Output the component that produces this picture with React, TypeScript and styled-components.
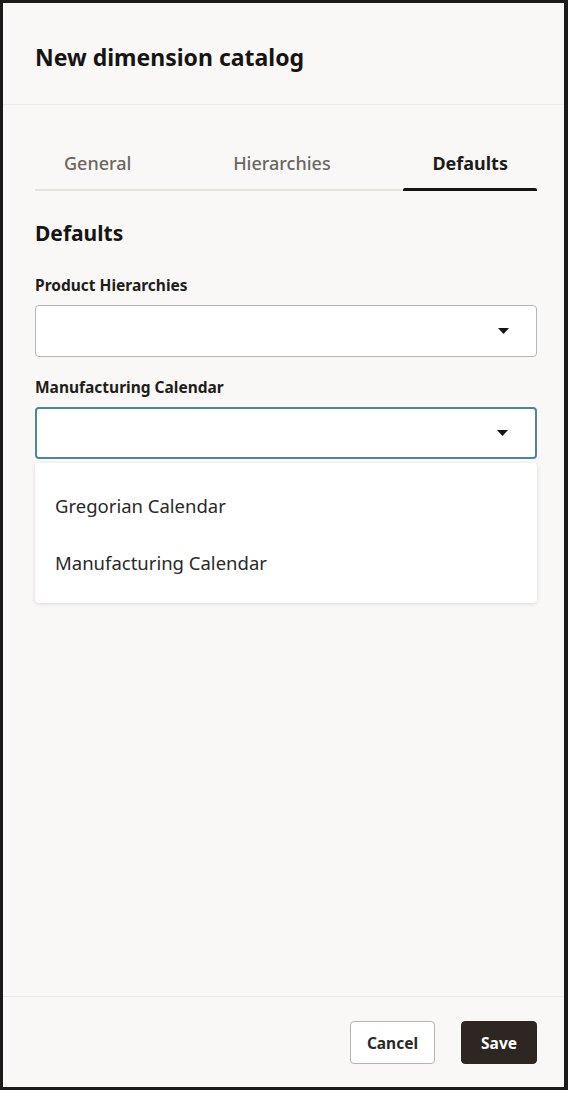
import type { ReactElement } from 'react';
import styled, { createGlobalStyle } from 'styled-components';

const GlobalStyle = createGlobalStyle`
	html, body {
		margin: 0;
		padding: 0;
		background: #ffffff;
	}

	body {
		font-family: 'Noto Sans', 'Open Sans', sans-serif;
		color: #161513;
	}
`;

const Frame = styled.div`
	box-sizing: border-box;
	width: 568px;
	height: 1090px;
	display: flex;
	flex-direction: column;
	background: #f9f8f6;
	border-top: 3px solid #1b1b1b;
	border-left: 3px solid #1b1b1b;
	border-right: 4px solid #1b1b1b;
	border-bottom: 3px solid #1b1b1b;
`;

const Header = styled.header`
	padding: 40px 27px 33px 32px;
	border-bottom: 1px solid #eeebe7;
`;

const Title = styled.h1`
	margin: 0;
	font-size: 23px;
	line-height: 28px;
	font-weight: 700;
`;

const Body = styled.main`
	flex: 1;
	display: flex;
	flex-direction: column;
	padding: 0 27px 0 32px;
`;

const TabBar = styled.nav`
	display: flex;
	justify-content: space-between;
	margin-top: 44px;
	border-bottom: 2px solid #e6e3df;
`;

const Tab = styled.div<{ $active?: boolean }>`
	position: relative;
	padding: 0 29px 12px;
	font-size: 18px;
	line-height: 28px;
	font-weight: ${(p) => (p.$active ? 700 : 500)};
	color: ${(p) => (p.$active ? '#1d1b19' : '#6b6661')};

	&::after {
		content: '';
		display: ${(p) => (p.$active ? 'block' : 'none')};
		position: absolute;
		left: 0;
		right: 0;
		bottom: -2px;
		height: 3px;
		border-radius: 2px 2px 0 0;
		background: #161513;
	}
`;

const SectionTitle = styled.h2`
	margin: 26px 0 6px;
	font-size: 21px;
	line-height: 32px;
	font-weight: 700;
`;

const Label = styled.label`
	display: block;
	margin-top: 20px;
	font-size: 15.5px;
	line-height: 20px;
	font-weight: 700;
	color: #1f1d1b;
`;

const Select = styled.div<{ $focused?: boolean }>`
	box-sizing: border-box;
	display: flex;
	align-items: center;
	justify-content: flex-end;
	height: 52px;
	margin-top: 10px;
	padding-right: 27px;
	background: #ffffff;
	border: ${(p) => (p.$focused ? '2px solid #4e8698' : '1px solid #b8b4af')};
	border-radius: 4px;
`;

const Menu = styled.ul`
	list-style: none;
	margin: 4px 0 0;
	padding: 14px 0 12px;
	background: #ffffff;
	border-radius: 4px;
	box-shadow: 0 1px 4px rgba(0, 0, 0, 0.12);
`;

const MenuItem = styled.li`
	height: 57px;
	display: flex;
	align-items: center;
	padding-left: 20px;
	font-size: 18.5px;
	color: #2b2927;
`;

const Footer = styled.footer`
	display: flex;
	justify-content: flex-end;
	gap: 26px;
	padding: 24px 27px 23px 32px;
	border-top: 1px solid #eeebe7;
`;

const Button = styled.button<{ $primary?: boolean }>`
	height: 43px;
	padding: 0 ${(p) => (p.$primary ? '19px' : '16px')};
	font-family: inherit;
	font-size: 15.5px;
	font-weight: 700;
	border-radius: 4px;
	cursor: pointer;
	color: ${(p) => (p.$primary ? '#ffffff' : '#2b2927')};
	background: ${(p) => (p.$primary ? '#2d2623' : '#ffffff')};
	border: ${(p) => (p.$primary ? '1px solid #2d2623' : '1px solid #b8b4af')};
`;

function Caret(): ReactElement {
	return (
		<svg width="11" height="6" viewBox="0 0 11 6" aria-hidden>
			<path d="M0 0h11L5.5 6z" fill="#161513" />
		</svg>
	);
}

export default function App(): ReactElement {
	return (
		<>
			<GlobalStyle />
			<Frame>
				<Header>
					<Title>New dimension catalog</Title>
				</Header>
				<Body>
					<TabBar>
						<Tab>General</Tab>
						<Tab>Hierarchies</Tab>
						<Tab $active>Defaults</Tab>
					</TabBar>
					<SectionTitle>Defaults</SectionTitle>
					<Label>Product Hierarchies</Label>
					<Select>
						<Caret />
					</Select>
					<Label>Manufacturing Calendar</Label>
					<Select $focused>
						<Caret />
					</Select>
					<Menu>
						<MenuItem>Gregorian Calendar</MenuItem>
						<MenuItem>Manufacturing Calendar</MenuItem>
					</Menu>
				</Body>
				<Footer>
					<Button>Cancel</Button>
					<Button $primary>Save</Button>
				</Footer>
			</Frame>
		</>
	);
}
